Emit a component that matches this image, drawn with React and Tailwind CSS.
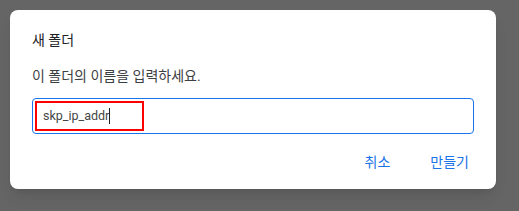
export default function App() {
    const font = { fontFamily: "Roboto, 'Noto Sans CJK KR', sans-serif" };
    return (
        <div className="w-[519px] h-[211px] bg-[#656565] pt-[10px] pl-[10px]" style={font}>
            <div className="w-[486px] h-[179px] bg-white rounded-lg shadow-lg px-[22px] pt-[20px]">
                <h2 className="text-[14px] leading-5 text-[#202124]">새 폴더</h2>
                <p className="mt-[16px] text-[14px] leading-5 text-[#3c4043]">이 폴더의 이름을 입력하세요.</p>

                <div className="mt-[12px] h-[36px] w-[442px] rounded border border-[#1a73e8] p-[2px] flex items-center">
                    <div className="h-[30px] w-[109px] border-2 border-[#ff0000] flex items-center pl-[6px]">
                        <span className="text-[12.5px] text-[#444746] leading-none">skp_ip_addr</span>
                        <span className="w-px h-[16px] bg-[#202124]"></span>
                    </div>
                </div>

                <div className="mt-[18px] flex justify-end gap-[30px] w-[442px]">
                    <button className="px-[5px] text-[14px] leading-5 text-[#1a73e8]">취소</button>
                    <button className="px-[5px] text-[14px] leading-5 text-[#1a73e8]">만들기</button>
                </div>
            </div>
        </div>
    );
}
